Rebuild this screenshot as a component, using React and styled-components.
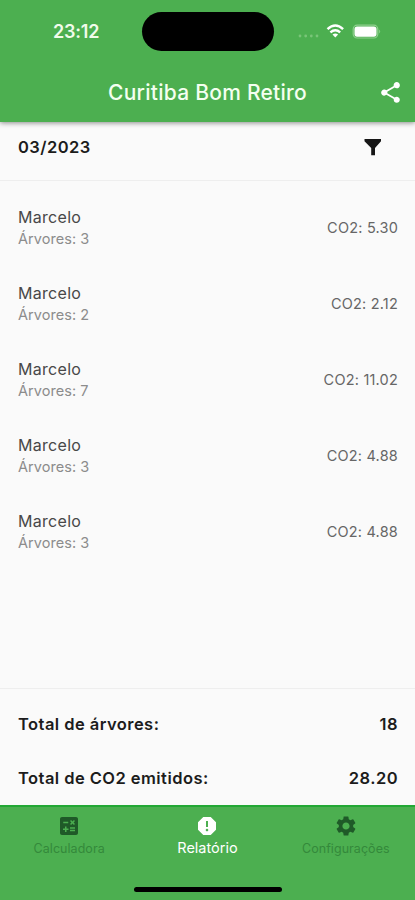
import React from "react";
import styled, { createGlobalStyle } from "styled-components";
import { MdShare, MdCalculate, MdReport, MdSettings } from "react-icons/md";

const GlobalStyle = createGlobalStyle`
  * { box-sizing: border-box; }
  body { margin: 0; background: #fafafa; }
`;

const Screen = styled.div`
  width: 415px;
  height: 900px;
  display: flex;
  flex-direction: column;
  overflow: hidden;
  background: #fafafa;
  color: #1c1c1c;
  font-family: Inter, "Liberation Sans", sans-serif;
`;

const Header = styled.header`
  flex: none;
  height: 122px;
  background: #4caf50;
  color: #fff;
  box-shadow: 0 1px 5px rgba(0, 0, 0, 0.45);
`;

const StatusBar = styled.div`
  height: 63px;
  display: grid;
  grid-template-columns: 142px 132px 1fr;
  align-items: center;
`;

const Clock = styled.span`
  padding-left: 53px;
  font-size: 18px;
  font-weight: 600;
  letter-spacing: -0.2px;
  color: #f1fbea;
`;

const Island = styled.div`
  height: 39px;
  border-radius: 20px;
  background: #000;
`;

const StatusIcons = styled.svg`
  width: 88px;
  height: 24px;
  margin-left: 21px;
`;

const TitleBar = styled.div`
  height: 59px;
  display: grid;
  grid-template-columns: 50px 1fr 50px;
  align-items: center;
  justify-items: center;
`;

const Title = styled.h1`
  margin: 0;
  font-size: 21px;
  line-height: 28px;
  font-weight: 500;
  letter-spacing: 0.25px;
  color: #f4fff0;
`;

const IconButton = styled.button`
  display: flex;
  padding: 0;
  border: 0;
  background: none;
  color: inherit;
  font-size: 25px;
`;

const Filter = styled.section`
  flex: none;
  height: 59px;
  padding: 0 30px 8px 18px;
  display: flex;
  align-items: center;
  justify-content: space-between;
  border-bottom: 1px solid #eeeeee;
`;

const Strong = styled.span`
  font-size: 16.5px;
  line-height: 22px;
  font-weight: 600;
  letter-spacing: 0.45px;
`;

const List = styled.ul`
  flex: 1;
  margin: 0;
  padding: 9px 17px 0 18px;
  list-style: none;
`;

const Row = styled.li`
  height: 76px;
  display: flex;
  align-items: center;
  justify-content: space-between;
`;

const Person = styled.div`
  display: flex;
  flex-direction: column;
`;

const Name = styled.span`
  font-size: 16px;
  line-height: 22px;
  letter-spacing: 0.3px;
  color: #484848;
`;

const Trees = styled.span`
  font-size: 14.5px;
  line-height: 22px;
  letter-spacing: 0.05px;
  color: #8c8c8c;
`;

const Amount = styled.span`
  padding-bottom: 2px;
  font-size: 14.5px;
  letter-spacing: 0.2px;
  color: #666;
`;

const Totals = styled.section`
  flex: none;
  height: 117px;
  padding: 8px 17px 0 18px;
  border-top: 1px solid #eeeeee;
`;

const TotalRow = styled.div`
  height: 54px;
  display: flex;
  align-items: center;
  justify-content: space-between;
`;

const Nav = styled.nav`
  flex: none;
  height: 95px;
  background: #4caf50;
  border-top: 2px solid #22a834;
  display: flex;
  flex-direction: column;
  align-items: center;
`;

const Tabs = styled.div`
  width: 100%;
  height: 79px;
  display: grid;
  grid-template-columns: repeat(3, 1fr);
`;

const Tab = styled.div`
  display: flex;
  flex-direction: column;
  align-items: center;
  padding-top: 7px;
  font-size: 24px;
  color: ${(p) => (p.$active ? "#fff" : "#1f5a28")};
`;

const TabLabel = styled.span`
  margin-top: ${(p) => (p.$active ? 1 : 2)}px;
  font-size: ${(p) => (p.$active ? 14.5 : 12.5)}px;
  line-height: 18px;
  letter-spacing: ${(p) => (p.$active ? 0 : 0.05)}px;
  color: ${(p) => (p.$active ? "#fff" : "#34893b")};
`;

const HomeIndicator = styled.div`
  width: 148px;
  height: 5px;
  margin-top: 1px;
  border-radius: 3px;
  background: #000;
`;

function FunnelIcon() {
  return (
    <svg width="25" height="25" viewBox="0 0 25 25" fill="#161616">
      <path d="M4.5 4H21V6.2L15 13V20.3H11.2V13L4.5 6.2Z" />
    </svg>
  );
}

const entries = [
  [3, "5.30"],
  [2, "2.12"],
  [7, "11.02"],
  [3, "4.88"],
  [3, "4.88"],
];

export default function App() {
  return (
    <Screen>
      <GlobalStyle />
      <Header>
        <StatusBar>
          <Clock>23:12</Clock>
          <Island />
          <StatusIcons viewBox="295 20 88 24">
            <g fill="#79c578">
              <circle cx="300" cy="36" r="1.4" />
              <circle cx="305.7" cy="36" r="1.4" />
              <circle cx="311.3" cy="36" r="1.4" />
              <circle cx="317" cy="36" r="1.4" />
            </g>
            <g fill="none" stroke="#fff" strokeWidth="2.4">
              <path d="M327.5 29.2Q335.3 21.9 343.1 29.2" />
              <path d="M330.4 32.4Q335.3 28.1 340.2 32.4" />
            </g>
            <path d="M332.5 34.5Q335.3 32.3 338.1 34.5L335.3 37.4Z" fill="#fff" />
            <rect x="353.2" y="25.2" width="24.6" height="12.8" rx="4" fill="none" stroke="#8fd08e" strokeWidth="1.2" />
            <rect x="354.5" y="26.5" width="22" height="10.2" rx="2.6" fill="#fff" />
            <path d="M379.2 29.6Q381.2 31.6 379.2 33.6Z" fill="#8fd08e" />
          </StatusIcons>
        </StatusBar>
        <TitleBar>
          <span />
          <Title>Curitiba Bom Retiro</Title>
          <IconButton aria-label="Compartilhar"><MdShare /></IconButton>
        </TitleBar>
      </Header>
      <Filter>
        <Strong>03/2023</Strong>
        <IconButton aria-label="Filtrar"><FunnelIcon /></IconButton>
      </Filter>
      <List>
        {entries.map(([trees, co2], i) => (
          <Row key={i}>
            <Person>
              <Name>Marcelo</Name>
              <Trees>Árvores: {trees}</Trees>
            </Person>
            <Amount>CO2: {co2}</Amount>
          </Row>
        ))}
      </List>
      <Totals>
        <TotalRow>
          <Strong>Total de árvores:</Strong>
          <Strong>18</Strong>
        </TotalRow>
        <TotalRow>
          <Strong>Total de CO2 emitidos:</Strong>
          <Strong>28.20</Strong>
        </TotalRow>
      </Totals>
      <Nav>
        <Tabs>
          <Tab>
            <MdCalculate />
            <TabLabel>Calculadora</TabLabel>
          </Tab>
          <Tab $active>
            <MdReport />
            <TabLabel $active>Relatório</TabLabel>
          </Tab>
          <Tab>
            <MdSettings />
            <TabLabel>Configurações</TabLabel>
          </Tab>
        </Tabs>
        <HomeIndicator />
      </Nav>
    </Screen>
  );
}
